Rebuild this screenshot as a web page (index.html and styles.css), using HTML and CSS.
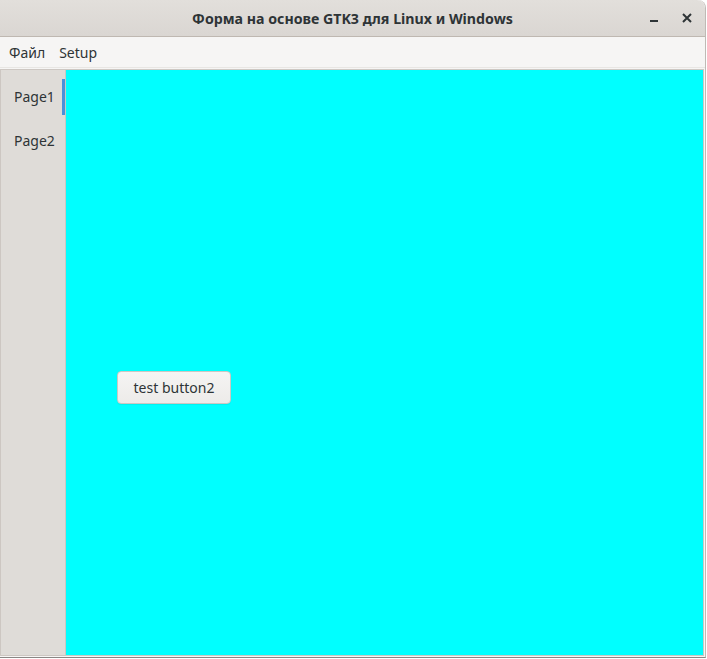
FILE: index.html
```html
<!DOCTYPE html>
<html>
<head>
<meta charset="utf-8">
<link rel="stylesheet" href="styles.css">
</head>
<body>
<div class="window">
  <div class="titlebar">
    <div class="title">Форма на основе GTK3 для Linux и Windows</div>
    <div class="controls">
      <svg class="ctl min" width="16" height="16" viewBox="0 0 16 16"><rect x="4" y="10" width="8" height="2" fill="#2e3436"/></svg>
      <svg class="ctl close" width="16" height="16" viewBox="0 0 16 16"><path d="M4 4 L12 12 M12 4 L4 12" stroke="#2e3436" stroke-width="2" fill="none"/></svg>
    </div>
  </div>
  <div class="menubar">
    <span class="menuitem">Файл</span>
    <span class="menuitem">Setup</span>
  </div>
  <div class="notebook">
    <div class="tabs">
      <div class="tab active">Page1</div>
      <div class="tab">Page2</div>
    </div>
    <div class="page">
      <button class="btn">test button2</button>
    </div>
  </div>
</div>
</body>
</html>
```
FILE: styles.css
```css
html, body {
  margin: 0;
  padding: 0;
  width: 707px;
  height: 659px;
  overflow: hidden;
  background: #ffffff;
}
.window {
  width: 705px;
  height: 657px;
  border-right: 1px solid #bfbab5;
  border-bottom: 1px solid #8a8684;
  border-top-right-radius: 8px;
  display: flex;
  flex-direction: column;
  background: #f6f5f4;
  font-family: "Noto Sans", "Open Sans", sans-serif;
  color: #2e3436;
  overflow: hidden;
}
.titlebar {
  height: 36px;
  flex: none;
  background: linear-gradient(#e2dfdb, #dad6d2);
  border-bottom: 1px solid #bfb8b1;
  display: flex;
  align-items: center;
  justify-content: center;
  position: relative;
  border-top-right-radius: 8px;
}
.title {
  font-weight: bold;
  font-size: 14.2px;
  color: #2e3436;
}
.controls {
  position: absolute;
  right: 10px;
  top: 10px;
  display: flex;
  gap: 17px;
}
.menubar {
  height: 30px;
  flex: none;
  display: flex;
  align-items: center;
  padding-left: 9px;
  gap: 14px;
  font-size: 14px;
  background: #f6f5f4;
  border-bottom: 1px solid #e8e6e3;
}
.menuitem {
  color: #2e3436;
}
.notebook {
  flex: 1;
  display: flex;
  border: 1px solid #cdc7c2;
  margin-top: 1px;
  margin-right: 1px;
  margin-bottom: 1px;
}
.tabs {
  width: 64px;
  flex: none;
  background: #dfdcd8;
  padding-top: 9px;
  display: flex;
  flex-direction: column;
  border-right: 1px solid #cdc7c2;
}
.tab {
  height: 36px;
  line-height: 36px;
  padding-left: 13px;
  font-size: 14px;
  color: #2e3436;
  box-sizing: border-box;
  margin-bottom: 8px;
}
.tab.active {
  border-right: 3px solid #4a90d9;
}
.page {
  flex: 1;
  background: #00ffff;
  position: relative;
}
.btn {
  position: absolute;
  left: 51px;
  top: 301px;
  width: 114px;
  height: 33px;
  border: 1px solid #cdc7c2;
  border-radius: 4px;
  background: linear-gradient(#f5f4f3, #edebe9);
  font-family: "Noto Sans", "Open Sans", sans-serif;
  font-size: 14px;
  color: #2e3436;
  padding: 0;
  box-shadow: 0 1px 0 rgba(0,0,0,0.05);
}
```
